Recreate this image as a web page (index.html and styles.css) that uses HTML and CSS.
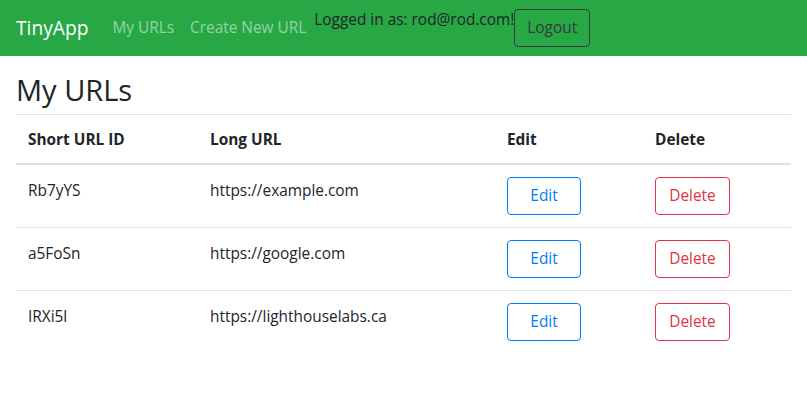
FILE: index.html
```html
<!DOCTYPE html>
<html lang="en">
<head>
<meta charset="utf-8">
<title>TinyApp</title>
<link rel="stylesheet" href="styles.css">
</head>
<body>
<nav class="navbar">
  <a class="brand" href="#">TinyApp</a>
  <div class="nav-links">
    <a class="nav-link" href="#">My URLs</a>
    <a class="nav-link" href="#">Create New URL</a>
  </div>
  <div class="login">
    <span class="login-text">Logged in as: rod@rod.com!</span><button class="btn btn-dark">Logout</button>
  </div>
</nav>
<main class="container">
  <h1 class="title">My URLs</h1>
  <table class="table">
    <colgroup>
      <col class="c1"><col class="c2"><col class="c3"><col class="c4">
    </colgroup>
    <thead>
      <tr><th>Short URL ID</th><th>Long URL</th><th>Edit</th><th>Delete</th></tr>
    </thead>
    <tbody>
      <tr><td>Rb7yYS</td><td>https://example.com</td><td class="act"><button class="btn btn-primary">Edit</button></td><td class="act"><button class="btn btn-danger">Delete</button></td></tr>
      <tr><td>a5FoSn</td><td>https://google.com</td><td class="act"><button class="btn btn-primary">Edit</button></td><td class="act"><button class="btn btn-danger">Delete</button></td></tr>
      <tr><td>IRXi5l</td><td>https://lighthouselabs.ca</td><td class="act"><button class="btn btn-primary">Edit</button></td><td class="act"><button class="btn btn-danger">Delete</button></td></tr>
    </tbody>
  </table>
</main>
</body>
</html>
```
FILE: styles.css
```css
* { box-sizing: border-box; }
html, body { margin: 0; }
body {
  font-family: "Open Sans", "Noto Sans", sans-serif;
  font-size: 15.4px;
  line-height: 24px;
  color: #212529;
  background: #fff;
}
.navbar {
  display: flex;
  align-items: flex-start;
  background: #28a745;
  height: 56px;
  padding: 8px 16px;
}
.brand {
  color: #fff;
  text-decoration: none;
  font-size: 19.2px;
  line-height: 30px;
  padding: 5px 0;
  margin-right: 16px;
}
.nav-links { display: flex; }
.nav-link {
  color: rgba(255,255,255,.5);
  text-decoration: none;
  padding: 8px;
  line-height: 24px;
}
.login {
  display: flex;
  align-items: flex-start;
  padding-top: 1px;
}
.login-text { color: #212529; line-height: 24px; margin-top: -1px; }
.btn {
  font-family: inherit;
  font-size: 15.4px;
  line-height: 24px;
  padding: 6px 12px;
  border-radius: 4px;
  background: transparent;
  border: 1px solid;
  cursor: pointer;
}
.btn-dark { color: #343a40; border-color: #343a40; }
.btn-primary { color: #007bff; border-color: #007bff; width: 74px; }
.btn-danger { color: #dc3545; border-color: #dc3545; width: 75px; }
.container { padding: 0 16px; }
.title {
  font-size: 29px;
  font-weight: 500;
  line-height: 36px;
  margin: 16px 0 6px;
}
.table {
  width: 100%;
  border-collapse: collapse;
  table-layout: fixed;
}
.c1 { width: 182px; }
.c2 { width: 297px; }
.c3 { width: 148px; }
.c4 { width: 148px; }
.table th, .table td {
  padding: 14px 12px 10px;
  text-align: left;
  vertical-align: top;
  border-top: 1px solid #dee2e6;
}
.table td.act { padding: 12px; }
.table thead th {
  font-weight: 700;
  padding: 13px 12px 11px;
  border-bottom: 2px solid #dee2e6;
}
.table tbody tr:first-child td { border-top: 0; }
```
